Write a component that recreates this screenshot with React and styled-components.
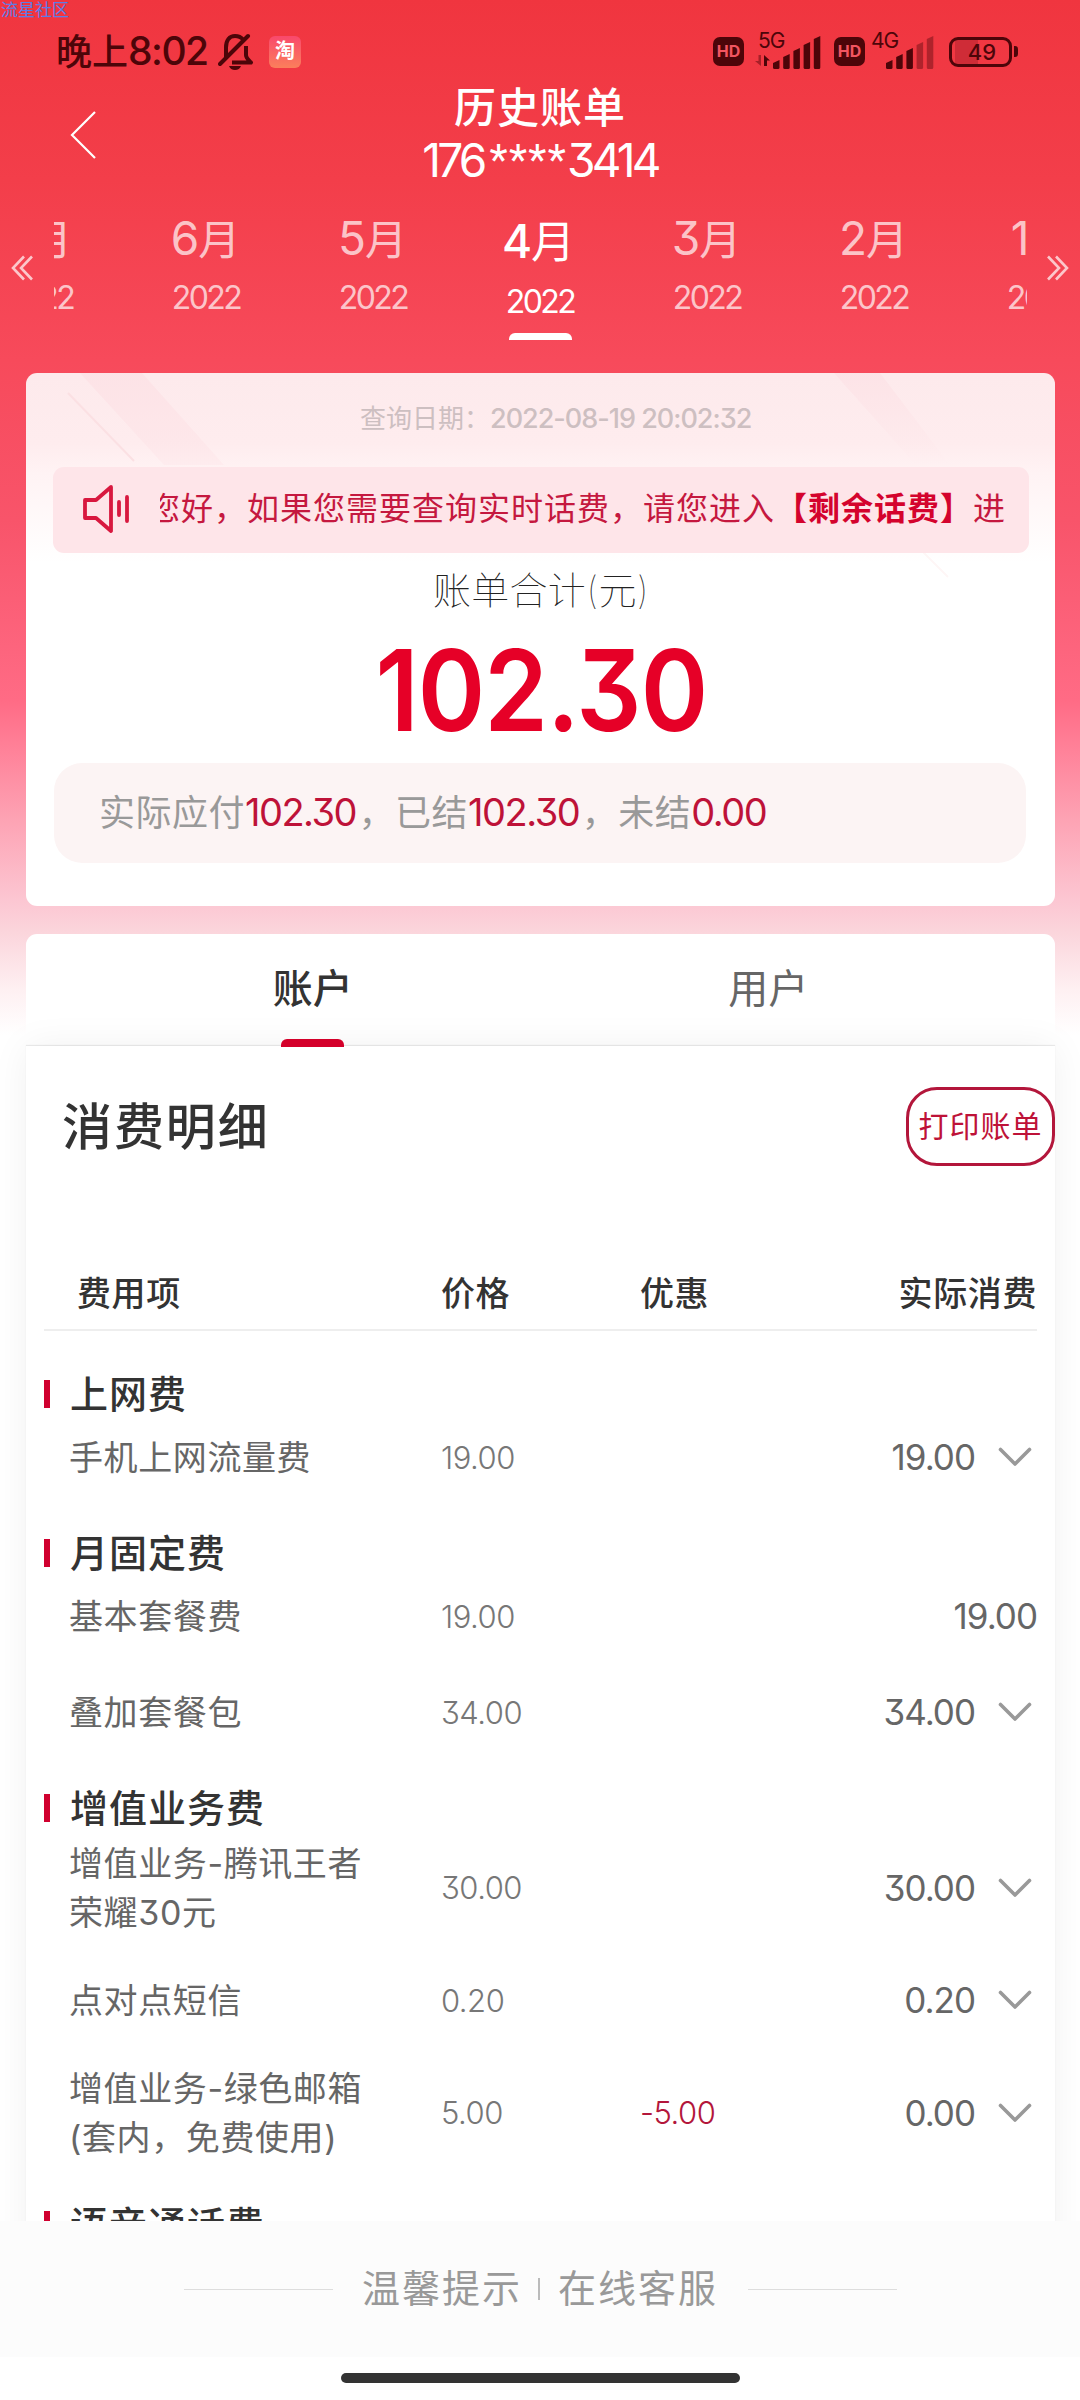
import React from "react";
import styled, { createGlobalStyle } from "styled-components";

const months = [
  { month: "7", year: "2022" },
  { month: "6", year: "2022" },
  { month: "5", year: "2022" },
  { month: "4", year: "2022", active: true },
  { month: "3", year: "2022" },
  { month: "2", year: "2022" },
  { month: "1", year: "2022" },
];

const groups = [
  {
    title: "上网费",
    rows: [{ name: "手机上网流量费", price: "19.00", total: "19.00", more: true }],
  },
  {
    title: "月固定费",
    rows: [
      { name: "基本套餐费", price: "19.00", total: "19.00" },
      { name: "叠加套餐包", price: "34.00", total: "34.00", more: true },
    ],
  },
  {
    title: "增值业务费",
    rows: [
      { name: "增值业务-腾讯王者\n荣耀30元", price: "30.00", total: "30.00", more: true, tall: true },
      { name: "点对点短信", price: "0.20", total: "0.20", more: true },
      { name: "增值业务-绿色邮箱\n(套内，免费使用)", price: "5.00", off: "-5.00", total: "0.00", more: true, tall: true },
    ],
  },
  { title: "语音通话费", rows: [] },
];

function Bell() {
  return (
    <svg width="36" height="38" viewBox="0 0 36 38" fill="none" stroke="#4d0509" strokeWidth="4">
      <path d="M8 24V14.500C8 7 11.500 3 17 3c3.500 0 6 1 8 3.500" />
      <path d="M28 13v9c0 3 2.500 5 5 7.500H14" strokeLinejoin="round" />
      <path d="M2 31L30 3" strokeLinecap="round" />
      <path d="M11 33h12c-1 2.800-3 4-6 4s-5-1.200-6-4z" fill="#4d0509" stroke="none" />
    </svg>
  );
}

function Signal({ label, level, data }) {
  return (
    <SignalBox $data={data}>
      <SignalLabel>{label}</SignalLabel>
      <svg width="68" height="34" viewBox="0 0 68 34" fill="#4d0509">
        {data && (
          <g>
            <path d="M8 20v11l-6-5h3.500v-6z" opacity=".45" />
            <path d="M11 31V20l6 5.500h-3V31z" />
          </g>
        )}
        {[0, 1, 2, 3, 4].map((i) => (
          <path
            key={i}
            opacity={i < level ? 1 : 0.4}
            d={`M${20 + i * 10.2} ${28 - i * 6}l6.500-3V32.500q0 1.500-1.500 1.500h-3.500q-1.500 0-1.500-1.500z`}
          />
        ))}
      </svg>
    </SignalBox>
  );
}

function Speaker() {
  return (
    <svg width="50" height="50" viewBox="0 0 50 50" fill="none" stroke="#d8183f" strokeWidth="3.800" strokeLinejoin="round" strokeLinecap="round">
      <path d="M3 16v18h11l15 13V3L14 16z" />
      <path d="M37 18v13M45 13v24" />
    </svg>
  );
}

function DoubleArrow({ flip }) {
  return (
    <svg width="22" height="26" viewBox="0 0 22 26" fill="none" stroke="#fff" strokeOpacity=".7" strokeWidth="2.600" transform={flip ? "scale(-1 1)" : undefined}>
      <path d="M13 1.500L2 13l11 11.500M21 1.500L10 13l11 11.500" />
    </svg>
  );
}

function Down() {
  return (
    <svg width="34" height="20" viewBox="0 0 34 20" fill="none" stroke="#999" strokeWidth="3.600" strokeLinecap="round" strokeLinejoin="round">
      <path d="M2.500 2.500L17 17 31.500 2.500" />
    </svg>
  );
}

function Stripes() {
  return (
    <StripesSvg width="1029" height="210" viewBox="0 0 1029 210">
      <defs>
        <linearGradient id="band" x1="0" y1="0" x2="0" y2="1">
          <stop offset="0" stopColor="#fcdde2" stopOpacity=".55" />
          <stop offset="1" stopColor="#fcdde2" stopOpacity=".25" />
        </linearGradient>
        <linearGradient id="bandRight" x1="0" y1="0" x2="0" y2="1">
          <stop offset="0" stopColor="#fcdde2" stopOpacity=".5" />
          <stop offset="1" stopColor="#fcdde2" stopOpacity="0" />
        </linearGradient>
      </defs>
      <path d="M54 0h62l82 92h-60z" fill="url(#band)" />
      <path d="M42 20l66 68" stroke="#fbe0e3" strokeWidth="2" />
      <path d="M808 0h46l70 92h-34z" fill="url(#bandRight)" />
      <path d="M896 178l26 26" stroke="#fef6f6" strokeWidth="2" />
    </StripesSvg>
  );
}

function BillRow({ row }) {
  return (
    <Row $tall={row.tall}>
      <Name>{row.name}</Name>
      <Price>{row.price}</Price>
      <Price $off>{row.off}</Price>
      <Total>
        {row.total}
        {row.more && <Down />}
      </Total>
    </Row>
  );
}

export default function App() {
  return (
    <Page>
      <GlobalStyle />
      <Watermark>流星社区</Watermark>
      <StatusBar>
        <Clock>
          晚上<span>8:02</span>
        </Clock>
        <Bell />
        <Taobao>淘</Taobao>
        <StatusRight>
          <Hd>HD</Hd>
          <Signal label="5G" level={5} data />
          <Hd>HD</Hd>
          <Signal label="4G" level={3} />
          <Battery>49</Battery>
          <BatteryTip />
        </StatusRight>
      </StatusBar>

      <NavBar>
        <svg width="26" height="48" viewBox="0 0 26 48" fill="none" stroke="#fff" strokeWidth="2.200">
          <path d="M25 1L2 24l23 23" />
        </svg>
        <NavTitle>
          <Title>历史账单</Title>
          <Phone>
            176<Stars>****</Stars>3414
          </Phone>
        </NavTitle>
      </NavBar>

      <MonthBar>
        <DoubleArrow />
        <MonthList>
          {months.map((m) => (
            <MonthTab key={m.month} $active={m.active}>
              <Month $active={m.active}>
                <span>{m.month}</span>月
              </Month>
              <Year $active={m.active}>{m.year}</Year>
              {m.active && <Underline />}
            </MonthTab>
          ))}
        </MonthList>
        <DoubleArrow flip />
      </MonthBar>

      <Main>
        <SummaryCard>
          <Stripes />
          <QueryDate>
            查询日期：<span>2022-08-19 20:02:32</span>
          </QueryDate>
          <Notice>
            <Speaker />
            <Marquee>
              <MarqueeText>
                您好，如果您需要查询实时话费，请您进入<b>【剩余话费】</b>进
              </MarqueeText>
            </Marquee>
          </Notice>
          <SumLabel>账单合计(元)</SumLabel>
          <Sum>
            <span>102.30</span>
          </Sum>
          <Paid>
            实际应付<em>102.30</em>，已结<em>102.30</em>，未结<em>0.00</em>
          </Paid>
        </SummaryCard>

        <Tabs>
          <Tab $active>账户</Tab>
          <Tab>用户</Tab>
        </Tabs>

        <Detail>
          <DetailHead>
            <DetailTitle>消费明细</DetailTitle>
            <PrintButton>打印账单</PrintButton>
          </DetailHead>
          <TableHead>
            <span>费用项</span>
            <span>价格</span>
            <span>优惠</span>
            <span>实际消费</span>
          </TableHead>
          <Groups>
            {groups.map((g) => (
              <Group key={g.title}>
                <GroupTitle>{g.title}</GroupTitle>
                {g.rows.map((r) => (
                  <BillRow key={r.name} row={r} />
                ))}
              </Group>
            ))}
          </Groups>
        </Detail>
      </Main>

      <Footer>
        <Rule />
        <FooterLink>温馨提示</FooterLink>
        <Divider />
        <FooterLink>在线客服</FooterLink>
        <Rule />
      </Footer>
      <HomeArea>
        <HomeBar />
      </HomeArea>
    </Page>
  );
}

const GlobalStyle = createGlobalStyle`
  * { box-sizing: border-box; }
  body {
    margin: 0;
    font-family: Inter, "Noto Sans CJK SC", sans-serif;
    font-feature-settings: "cv09", "ss03";
    color: #333;
  }
`;

const Page = styled.div`
  position: relative;
  display: flex;
  flex-direction: column;
  width: 1080px;
  height: 2400px;
  overflow: hidden;
  background: #fff linear-gradient(#f0353f 0, #f33e4a 180px, #f74a5b 360px, #f8546a 520px, #ff6b85 700px, #ff7d95 740px, #fda3b4 820px, #fcc6d2 900px, #fbd4db 930px, #fef0f2 990px, #fff 1035px) no-repeat;
`;

const Watermark = styled.div`
  position: absolute;
  left: 1px;
  top: 0;
  font-family: "Noto Sans CJK SC", sans-serif;
  font-size: 17px;
  line-height: 17px;
  color: #5c7de8;
`;

const StatusBar = styled.div`
  display: flex;
  align-items: center;
  height: 82px;
  padding: 21px 62px 0 56px;
`;

const Clock = styled.div`
  width: 162px;
  font-size: 36px;
  font-weight: 500;
  line-height: 50px;
  white-space: nowrap;
  color: #4d0509;
  span {
    font-size: 39px;
    letter-spacing: -1.5px;
  }
`;

const Taobao = styled.div`
  width: 32px;
  height: 32px;
  margin-left: 15px;
  border-radius: 6px;
  background: linear-gradient(#f9486c, #fb7f5b);
  color: #fff;
  font-size: 20px;
  font-weight: 700;
  line-height: 31px;
  text-align: center;
`;

const StatusRight = styled.div`
  display: flex;
  align-items: center;
  margin-left: auto;
`;

const Hd = styled.div`
  width: 31px;
  height: 29px;
  border-radius: 7px;
  background: #4d0509;
  color: #f25560;
  font-size: 16px;
  font-weight: 700;
  line-height: 29px;
  text-align: center;
`;

const SignalBox = styled.div`
  position: relative;
  height: 34px;
  width: 68px;
  margin: ${(p) => (p.$data ? "0 13px 0 9px" : "0 12px 0 1px")};
`;

const SignalLabel = styled.span`
  position: absolute;
  left: 5px;
  top: -5px;
  font-size: 21px;
  line-height: 21px;
  letter-spacing: -1px;
  color: #4d0509;
`;

const Battery = styled.div`
  width: 63px;
  height: 30px;
  margin-left: 3px;
  padding-left: 3px;
  border: 3px solid #4d0509;
  border-radius: 9px;
  background: linear-gradient(90deg, transparent 6%, #cf2c37 6%, #cf2c37 45%, transparent 45%);
  color: #4d0509;
  font-size: 22px;
  font-weight: 500;
  line-height: 24px;
  text-align: center;
`;

const BatteryTip = styled.div`
  width: 4px;
  height: 11px;
  margin-left: 2px;
  border-radius: 0 3px 3px 0;
  background: #4d0509;
`;

const NavBar = styled.div`
  display: grid;
  grid-template-columns: 96px 1fr 96px;
  align-items: center;
  height: 104px;
  color: #fff;
  > svg {
    margin: 2px 0 0 70px;
  }
`;

const NavTitle = styled.div`
  text-align: center;
  line-height: 52px;
`;

const Title = styled.div`
  font-size: 42px;
  font-weight: 500;
  letter-spacing: 1px;
`;

const Phone = styled.div`
  height: 52px;
  font-size: 46px;
  letter-spacing: -3.8px;
`;

const Stars = styled.span`
  position: relative;
  top: -3px;
  margin-left: 6px;
  font-family: Roboto, sans-serif;
  font-size: 42px;
  letter-spacing: 1.3px;
`;

const MonthBar = styled.div`
  display: flex;
  justify-content: space-between;
  height: 154px;
  padding: 0 11px;
  > svg {
    margin-top: 69px;
  }
`;

const MonthList = styled.div`
  display: flex;
  justify-content: center;
  width: 973px;
  overflow: hidden;
`;

const MonthTab = styled.div`
  flex: none;
  display: flex;
  flex-direction: column;
  align-items: center;
  width: 167px;
  padding-top: ${(p) => (p.$active ? 29 : 26)}px;
  color: ${(p) => (p.$active ? "#fff" : "rgba(255, 255, 255, 0.7)")};
`;

const Month = styled.div`
  margin-right: ${(p) => (p.$active ? 3 : 1)}px;
  font-size: ${(p) => (p.$active ? 44 : 42)}px;
  line-height: 52px;
  span {
    font-size: 46px;
    font-weight: ${(p) => (p.$active ? 500 : 400)};
    letter-spacing: -1px;
  }
`;

const Year = styled.div`
  margin-top: ${(p) => (p.$active ? 14 : 12)}px;
  font-size: 32px;
  line-height: 40px;
  letter-spacing: -2.5px;
`;

const Underline = styled.div`
  width: 63px;
  height: 8px;
  margin-top: 11px;
  border-radius: 6px 6px 0 0;
  background: #fff;
`;

const Main = styled.div`
  height: 1881px;
  padding: 33px 25px 0 26px;
  overflow: hidden;
`;

const SummaryCard = styled.div`
  position: relative;
  height: 533px;
  padding: 0 26px 0 27px;
  border-radius: 11px;
  overflow: hidden;
  background: #fff linear-gradient(#fdeaec 0, #feecee 70px, #fff3f4 100px, #fff 190px);
`;

const StripesSvg = styled.svg`
  position: absolute;
  left: 0;
  top: 0;
`;

const QueryDate = styled.div`
  position: relative;
  height: 94px;
  padding-left: 307px;
  font-size: 26px;
  line-height: 92px;
  white-space: nowrap;
  color: #cdbfc1;
  span {
    font-size: 27px;
    letter-spacing: -1px;
    font-weight: 500;
  }
`;

const Notice = styled.div`
  position: relative;
  display: flex;
  align-items: center;
  height: 86px;
  padding: 0 23px 0 29px;
  border-radius: 11px;
  background: #fee5e9;
  > svg {
    margin-bottom: 2px;
  }
`;

const Marquee = styled.div`
  flex: 1;
  display: flex;
  justify-content: flex-end;
  margin: 0 0 3px 28px;
  overflow: hidden;
`;

const MarqueeText = styled.div`
  flex: none;
  font-size: 32px;
  letter-spacing: 1px;
  line-height: 50px;
  white-space: nowrap;
  color: #c5183f;
  b {
    color: #d4032d;
  }
`;

const SumLabel = styled.div`
  padding-top: 12px;
  font-size: 38px;
  font-weight: 100;
  line-height: 50px;
  letter-spacing: 0.3px;
  text-align: center;
  color: #222;
`;

const Sum = styled.div`
  height: 148px;
  font-size: 113px;
  font-weight: 600;
  line-height: 150px;
  text-align: center;
  color: #e60027;
  span {
    display: inline-block;
    letter-spacing: -1px;
    transform: scaleX(0.905);
  }
`;

const Paid = styled.div`
  height: 100px;
  margin: 0 3px 0 1px;
  padding-left: 45px;
  border-radius: 28px;
  background: #fcf4f4;
  font-size: 36px;
  letter-spacing: 0.5px;
  line-height: 98px;
  white-space: nowrap;
  color: #999;
  em {
    margin-right: 2.5px;
    font-style: normal;
    font-size: 38px;
    letter-spacing: -1.5px;
    color: #be1238;
  }
`;

const Tabs = styled.div`
  display: flex;
  height: 112px;
  margin-top: 28px;
  padding: 0 59px;
  border-radius: 11px 11px 0 0;
  background: #fff;
`;

const Tab = styled.div`
  position: relative;
  z-index: 1;
  flex: 1;
  font-size: 40px;
  line-height: 110px;
  text-align: center;
  color: ${(p) => (p.$active ? "#333" : "#666")};
  font-weight: ${(p) => (p.$active ? 500 : 400)};
  &::after {
    content: "";
    display: ${(p) => (p.$active ? "block" : "none")};
    width: 63px;
    height: 8px;
    margin: -5px auto 0;
    border-radius: 6px 6px 0 0;
    background: #d4002a;
  }
`;

const Detail = styled.div`
  height: 1300px;
  padding: 42px 0 0 18px;
  background: #fff;
  box-shadow: 0 -1px 1px rgba(0, 0, 0, 0.08), 0 0 36px rgba(0, 0, 0, 0.06);
`;

const DetailHead = styled.div`
  display: flex;
  align-items: center;
  justify-content: space-between;
  height: 77px;
  padding-left: 18px;
`;

const DetailTitle = styled.div`
  margin-bottom: 8px;
  font-size: 50px;
  font-weight: 500;
  letter-spacing: 1.9px;
`;

const PrintButton = styled.button`
  width: 149px;
  height: 79px;
  padding: 0 0 5px;
  border: 3px solid #b3163b;
  border-radius: 31px;
  background: none;
  font-family: inherit;
  font-size: 30px;
  letter-spacing: 1px;
  white-space: nowrap;
  color: #be1238;
`;

const TableHead = styled.div`
  display: grid;
  grid-template-columns: 364px 199px 1fr auto;
  margin-top: 88px;
  width: 993px;
  height: 78px;
  padding-left: 33px;
  border-bottom: 2px solid #eee;
  font-size: 34px;
  font-weight: 500;
  letter-spacing: 0.6px;
  line-height: 81px;
`;

const Groups = styled.div`
  padding-top: 15px;
`;

const Group = styled.div`
  margin-top: 33px;
`;

const GroupTitle = styled.div`
  display: flex;
  align-items: center;
  gap: 20px;
  height: 30px;
  font-size: 38px;
  font-weight: 500;
  letter-spacing: 1px;
  line-height: 30px;
  &::before {
    content: "";
    width: 6px;
    height: 28px;
    background: #d0002f;
  }
`;

const Row = styled.div`
  display: grid;
  grid-template-columns: 372px 199px 1fr auto;
  align-items: center;
  width: 993px;
  height: ${(p) => (p.$tall ? 129 : 96)}px;
  padding-left: 25px;
  color: #666;
`;

const Name = styled.div`
  font-size: 34px;
  line-height: 49px;
  letter-spacing: 0.6px;
  white-space: pre;
`;

const Price = styled.div`
  font-size: 31px;
  font-weight: 300;
  letter-spacing: -0.5px;
  color: ${(p) => (p.$off ? "#b3163b" : "#777")};
`;

const Total = styled.div`
  display: flex;
  align-items: center;
  font-size: 35px;
  letter-spacing: -1px;
  svg {
    margin: 0 5px 0 23px;
  }
`;

const Footer = styled.div`
  display: flex;
  align-items: center;
  justify-content: center;
  height: 136px;
  background: #fcfcfc;
`;

const FooterLink = styled.span`
  margin-bottom: 7px;
  font-size: 38px;
  letter-spacing: 2px;
  color: #999;
`;

const Rule = styled.div`
  width: 149px;
  height: 1px;
  margin: 0 29px 0 30px;
  background: #ddd;
`;

const Divider = styled.div`
  width: 2px;
  height: 22px;
  margin: 0 18px 0 16px;
  background: #bbb;
`;

const HomeArea = styled.div`
  display: flex;
  justify-content: center;
  height: 43px;
  padding-top: 16px;
  background: #fff;
`;

const HomeBar = styled.div`
  width: 399px;
  height: 10px;
  border-radius: 5px;
  background: #333;
`;
